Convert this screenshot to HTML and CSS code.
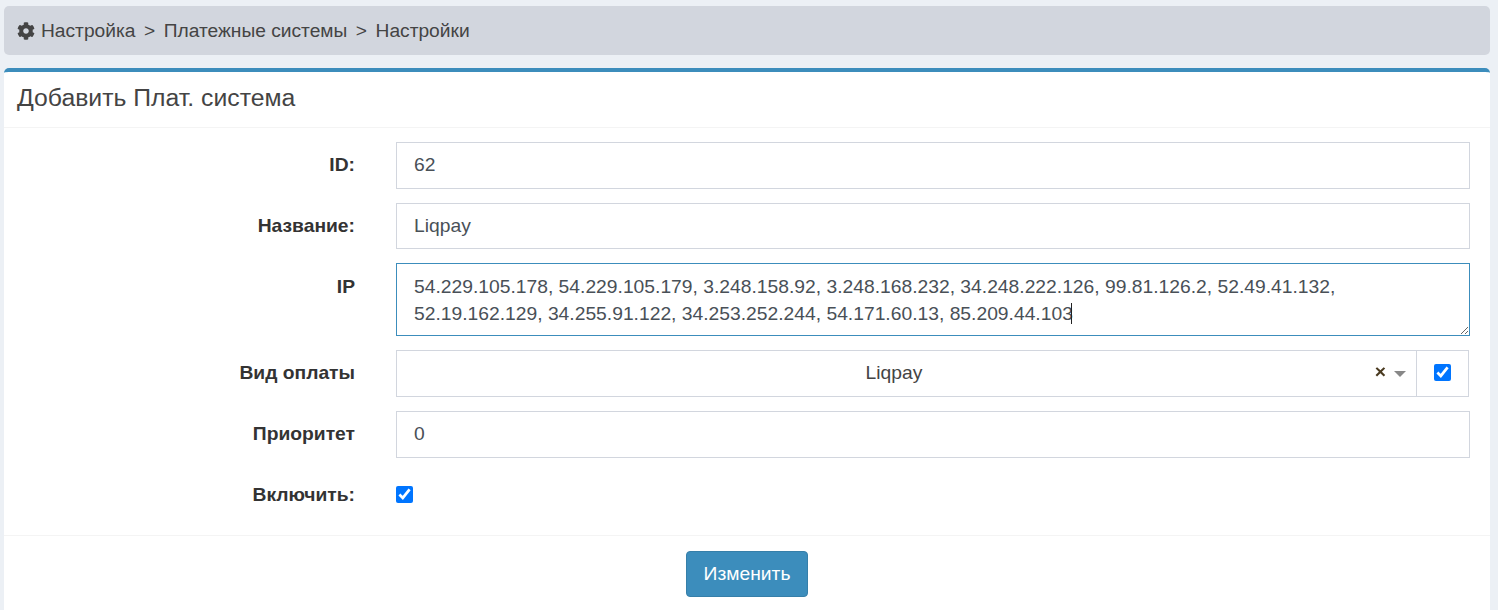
FILE: index.html
```html
<!DOCTYPE html>
<html lang="ru">
<head>
<meta charset="utf-8">
<title>Настройки</title>
<link rel="stylesheet" href="styles.css">
</head>
<body>
<nav class="crumbs">
  <svg class="gear" viewBox="0 0 512 512" aria-hidden="true"><path d="M487.4 315.7l-42.6-24.6c4.3-23.2 4.3-47 0-70.2l42.6-24.6c4.9-2.8 7.1-8.6 5.5-14-11.1-35.6-30-67.8-54.7-94.6-3.8-4.1-10-5.1-14.8-2.3L380.8 110c-17.9-15.4-38.5-27.3-60.8-35.1V25.8c0-5.6-3.9-10.5-9.4-11.7-36.7-8.2-74.3-7.8-109.2 0-5.5 1.2-9.4 6.1-9.4 11.7V75c-22.2 7.9-42.8 19.8-60.8 35.1L88.7 85.5c-4.9-2.8-11-1.9-14.8 2.3-24.7 26.7-43.6 58.9-54.7 94.6-1.7 5.4.6 11.2 5.5 14L67.3 221c-4.3 23.2-4.3 47 0 70.2l-42.6 24.6c-4.9 2.8-7.1 8.6-5.5 14 11.1 35.6 30 67.8 54.7 94.6 3.8 4.1 10 5.1 14.8 2.3l42.6-24.6c17.9 15.4 38.5 27.3 60.8 35.1v49.2c0 5.6 3.9 10.5 9.4 11.7 36.7 8.2 74.3 7.8 109.2 0 5.5-1.2 9.4-6.1 9.4-11.7v-49.2c22.2-7.9 42.8-19.8 60.8-35.1l42.6 24.6c4.9 2.8 11 1.9 14.8-2.3 24.7-26.7 43.6-58.9 54.7-94.6 1.5-5.5-.7-11.3-5.6-14.1zM256 336c-44.1 0-80-35.9-80-80s35.9-80 80-80 80 35.9 80 80-35.9 80-80 80z"/></svg>
  <span>Настройка</span><span class="sep">&gt;</span><span>Платежные системы</span><span class="sep">&gt;</span><span>Настройки</span>
</nav>
<main class="card">
  <h1 class="card-title">Добавить Плат. система</h1>
  <form class="form">
    <div class="row">
      <label class="label">ID:</label>
      <input class="field" type="text" value="62">
    </div>
    <div class="row">
      <label class="label">Название:</label>
      <input class="field" type="text" value="Liqpay">
    </div>
    <div class="row">
      <label class="label label-area">IP</label>
      <div class="area-wrap">
        <textarea class="field area" spellcheck="false">54.229.105.178, 54.229.105.179, 3.248.158.92, 3.248.168.232, 34.248.222.126, 99.81.126.2, 52.49.41.132, 52.19.162.129, 34.255.91.122, 34.253.252.244, 54.171.60.13, 85.209.44.103</textarea>
        <span class="caret"></span>
      </div>
    </div>
    <div class="row">
      <label class="label label-select">Вид оплаты</label>
      <div class="group">
        <div class="select">
          <span class="select-value">Liqpay</span>
          <span class="select-clear">×</span>
          <span class="select-arrow"></span>
        </div>
        <div class="addon"><input class="check" type="checkbox" checked></div>
      </div>
    </div>
    <div class="row">
      <label class="label">Приоритет</label>
      <input class="field" type="text" value="0">
    </div>
    <div class="row row-check">
      <label class="label">Включить:</label>
      <div class="check-wrap"><input class="check" type="checkbox" checked></div>
    </div>
  </form>
  <div class="footer"><button class="btn" type="button">Изменить</button></div>
</main>
</body>
</html>
```
FILE: styles.css
```css
* { box-sizing: border-box; }
html, body { margin: 0; height: 610px; overflow: hidden; }
body {
  background: #ecf0f5;
  padding: 6px 8px 0 4px;
  font-family: "Liberation Sans", Arial, sans-serif;
  font-size: 19.28px;
  color: #495057;
}
.crumbs {
  height: 49px;
  background: #d2d6de;
  border-radius: 5px;
  display: flex;
  align-items: center;
  padding-left: 13px;
  font-size: 19.2px;
  color: #444;
}
.gear { width: 18px; height: 18px; fill: #444; margin-right: 6px; }
.sep { margin: 0 8.5px; }
.card {
  margin-top: 13px;
  background: #fff;
  border-top: 4px solid #3c8dbc;
  border-radius: 5px 5px 0 0;
  height: 542px;
}
.card-title {
  margin: 0;
  height: 56px;
  padding: 0 13px 3px;
  display: flex;
  align-items: center;
  font-size: 24.75px;
  font-weight: 400;
  color: #444;
  border-bottom: 1px solid #f4f4f4;
}
.form {
  padding: 14px 20px 0 0;
  display: flex;
  flex-direction: column;
  gap: 14.1px;
  height: 408px;
  border-bottom: 1px solid #f4f4f4;
}
.row {
  display: grid;
  grid-template-columns: 351px 1fr;
  column-gap: 41px;
  align-items: center;
}
.label {
  text-align: right;
  font-weight: 700;
  color: #333;
  font-size: 19.28px;
}
.label-area { align-self: start; padding-top: 13px; }
.label-select { padding-bottom: 2px; }
.field {
  width: 100%;
  height: 46.6px;
  border: 1px solid #d2d6de;
  background: #fff;
  padding: 0 17px;
  font: inherit;
  color: #495057;
  outline: none;
  border-radius: 0;
}
.area-wrap { position: relative; }
.area {
  display: block;
  height: 72.8px;
  padding: 9px 17px;
  line-height: 27px;
  resize: vertical;
  border-color: #3c8dbc;
}
.caret {
  position: absolute;
  left: 675px;
  top: 40px;
  width: 1px;
  height: 21px;
  background: #222;
}
.group { display: flex; height: 46.6px; margin-right: 1px; }
.select {
  flex: 1;
  position: relative;
  border: 1px solid #d2d6de;
  border-right: 0;
  display: flex;
  align-items: center;
  justify-content: center;
  padding: 0 25px 2px 0;
  color: #444;
}
.select-clear {
  position: absolute;
  right: 30px;
  top: 10px;
  font-weight: 700;
  font-size: 19.28px;
  color: #4a3a20;
}
.select-arrow {
  position: absolute;
  right: 10px;
  top: 20px;
  width: 0;
  height: 0;
  border-left: 6px solid transparent;
  border-right: 6px solid transparent;
  border-top: 6px solid #888;
}
.addon {
  width: 53px;
  border: 1px solid #d2d6de;
  padding-bottom: 2px;
  display: flex;
  align-items: center;
  justify-content: center;
}
.check { width: 17px; height: 17px; margin: 0; accent-color: #0075ff; display: block; }
.row-check { height: 46.6px; }
.check-wrap { display: flex; align-items: center; padding-bottom: 1px; }
.footer { display: flex; justify-content: center; padding-top: 15px; }
.btn {
  width: 122px;
  height: 46px;
  background: #3c8dbc;
  border: 1px solid #367fa9;
  border-radius: 4px;
  color: #fff;
  font: inherit;
  padding-bottom: 2px;
}
```
